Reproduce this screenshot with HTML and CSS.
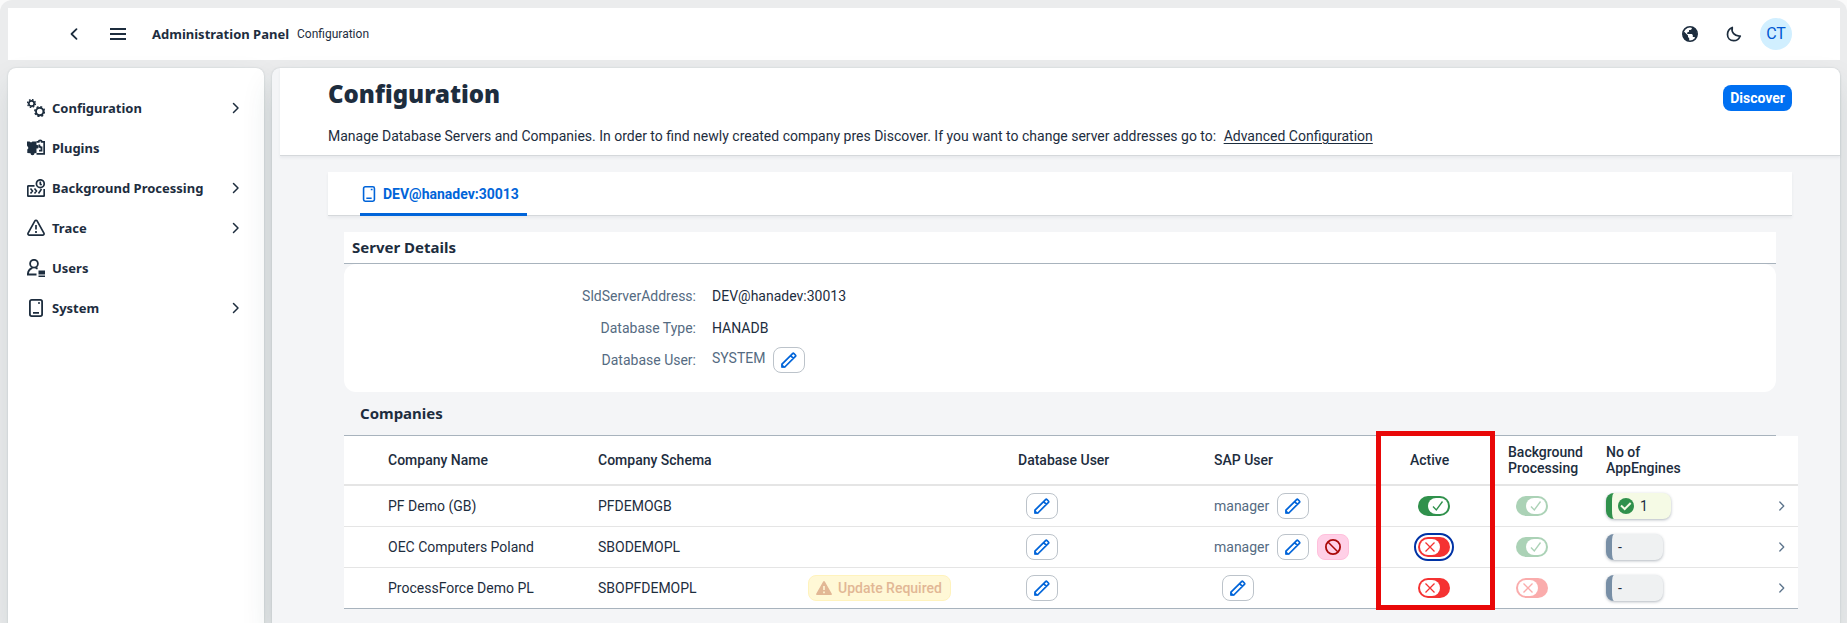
FILE: index.html
```html
<!DOCTYPE html>
<html lang="en">
<head>
<meta charset="utf-8">
<meta name="viewport" content="width=device-width, initial-scale=1">
<title>Administration Panel - Configuration</title>
<link rel="stylesheet" href="styles.css">
</head>
<body>
<svg class="sprite" aria-hidden="true">
  <symbol id="i-next" viewBox="0 0 16 16"><path d="M5.500 3.500 10 8l-4.500 4.500" fill="none" stroke="currentColor" stroke-width="1.500" stroke-linecap="round" stroke-linejoin="round"/></symbol>
  <symbol id="i-back" viewBox="0 0 16 16"><path d="M10.500 3.200 5.500 8l5 4.800" fill="none" stroke="currentColor" stroke-width="1.800" stroke-linecap="round" stroke-linejoin="round"/></symbol>
  <symbol id="i-menu" viewBox="0 0 16 16"><path d="M0 3h16M0 8h16M0 13h16" stroke="currentColor" stroke-width="2"/></symbol>
  <symbol id="i-globe" viewBox="0 0 16 16"><circle cx="8" cy="8" r="7.200" fill="none" stroke="currentColor" stroke-width="1.600"/><path d="M1.500 5 6 9.500V11l1.200 1.200V15C3.500 14.800 1 12 1 8zM9.800 1v2L8.500 4H7v1.700L5.200 6.500V8h4.600l1 1v2h1.600l1.200 1.300C14.700 11 15 9.500 15 8c0-3.300-2-6-5.200-7z" fill="currentColor"/></symbol>
  <symbol id="i-moon" viewBox="0 0 16 16"><path d="M6.300 1.500C5 6 8.500 10.500 14.300 10 13 13 10.500 14.700 7.700 14.700 4 14.700 1.500 12 1.500 8.500c0-3 1.800-5.800 4.800-7z" fill="none" stroke="currentColor" stroke-width="1.700" stroke-linejoin="round"/></symbol>
  <symbol id="i-gears" viewBox="0 0 18 18"><g fill="none" stroke="currentColor"><circle cx="4.500" cy="4.500" r="2.700" stroke-width="1.700"/><circle cx="4.500" cy="4.500" r="3.900" stroke-width="1.400" stroke-dasharray="1.600 1.463"/><circle cx="12.700" cy="12.600" r="3.700" stroke-width="1.900"/><circle cx="12.700" cy="12.600" r="4.900" stroke-width="1.500" stroke-dasharray="2 1.848"/></g></symbol>
  <symbol id="i-puzzle" viewBox="0 0 18 18"><path d="M0 2.500h2.500l1.500 1 1.500-1H9.500v3.500a1.800 1.800 0 1 1 0 3.500V14l-2 .3a2 2 0 1 1-4 0L.3 14v-3.500L1.500 9 0 6.500z" fill="currentColor"/><path d="M9.500 2.800h2.200a1.500 1.500 0 0 1 3 0h2.500v12H9.500M12.200 5.500c0 2 .8 3 2.300 3v3.200H12" fill="none" stroke="currentColor" stroke-width="1.800"/></symbol>
  <symbol id="i-process" viewBox="0 0 18 18"><g fill="none" stroke="currentColor" stroke-width="1.700"><circle cx="13.300" cy="4.700" r="3.900"/><path d="M13.300 2.500v2.500l1.300 1"/><path d="M7.500 6.800H1.600a.8.800 0 0 0-.8.800v8.800c0 .5.300.8.800.8h14.800c.5 0 .8-.3.800-.8V10"/><path d="M3.500 9.500 5.500 12l-2 2.500M7.500 9.500 9.500 12l-2 2.500M11.500 14.500l3-4.500" stroke-width="1.600"/></g></symbol>
  <symbol id="i-alert" viewBox="0 0 18 18"><path d="M7.900 1.900a1.300 1.300 0 0 1 2.200 0l6.800 12.300c.4.800 0 1.900-.9 1.900H2c-.9 0-1.300-1.100-.9-1.900z" fill="none" stroke="currentColor" stroke-width="1.700"/><path d="M9 6v4.500M9 12v2" stroke="currentColor" stroke-width="1.700"/></symbol>
  <symbol id="i-user" viewBox="0 0 18 18"><circle cx="7" cy="4.700" r="3.900" fill="none" stroke="currentColor" stroke-width="1.800"/><path d="M9.500 15.500H.9c0-3.500 2-5.700 4.500-6.700M8.600 8.800l2 .9" fill="none" stroke="currentColor" stroke-width="1.900"/><path d="M11.500 11.500H18v4h-6.500zM11.500 16.500H18V18h-6.500z" fill="currentColor"/></symbol>
  <symbol id="i-server" viewBox="0 0 18 18"><rect x="2.900" y=".9" width="12.200" height="16.200" rx="1.800" fill="none" stroke="currentColor" stroke-width="1.800"/><path d="M6 13.800h6M11 4h2" stroke="currentColor" stroke-width="1.700"/></symbol>
  <symbol id="i-edit" viewBox="0 0 16 16"><path d="M1 12.200 11.600 1.600a1 1 0 0 1 1.400 0l1.400 1.400a1 1 0 0 1 0 1.400L3.800 15H1zM9.600 3.600l2.800 2.800" fill="none" stroke="currentColor" stroke-width="1.700" stroke-linejoin="round"/><path d="M.5 11.500 4.500 15.500H.5z" fill="currentColor"/></symbol>
  <symbol id="i-block" viewBox="0 0 16 16"><circle cx="8" cy="8" r="7.100" fill="none" stroke="currentColor" stroke-width="1.800"/><path d="m3 3 10 10" stroke="currentColor" stroke-width="1.500"/></symbol>
  <symbol id="i-warn" viewBox="0 0 16 16"><path d="M7.200 1.500a1 1 0 0 1 1.600 0l7 12.200c.4.700 0 1.300-.8 1.300H1c-.8 0-1.200-.6-.8-1.300zM7.200 6v4h1.600V6zm0 5.500v1.700h1.600v-1.700z" fill="currentColor" fill-rule="evenodd"/></symbol>
  <symbol id="i-ok" viewBox="0 0 16 16"><circle cx="8" cy="8" r="8" fill="currentColor"/><path d="m3 7.500 3.700 3.500 6-6" fill="none" stroke="#f5fae5" stroke-width="2"/></symbol>
  <symbol id="i-tick" viewBox="0 0 12 12"><path d="m1 6.500 3.300 3.500L10.500 1.500" fill="none" stroke="currentColor" stroke-width="1.300"/></symbol>
  <symbol id="i-cross" viewBox="0 0 12 12"><path d="m1.500 1.500 9 9m0-9-9 9" fill="none" stroke="currentColor" stroke-width="1.300"/></symbol>
</svg>

<div class="shell">
  <header class="topbar">
    <button class="icon-btn" aria-label="Back"><svg class="ic16"><use href="#i-back"/></svg></button>
    <button class="icon-btn" aria-label="Menu"><svg class="ic16"><use href="#i-menu"/></svg></button>
    <span class="product">Administration Panel</span>
    <span class="crumb">Configuration</span>
    <div class="topbar-end">
      <button class="icon-btn" aria-label="Language"><svg class="ic16"><use href="#i-globe"/></svg></button>
      <button class="icon-btn" aria-label="Theme"><svg class="ic16"><use href="#i-moon"/></svg></button>
      <button class="avatar" aria-label="Profile">CT</button>
    </div>
  </header>

  <div class="columns">
    <nav class="sidebar">
      <a class="nav-item" href="#configuration"><svg class="ic18"><use href="#i-gears"/></svg><span>Configuration</span><svg class="ic16"><use href="#i-next"/></svg></a>
      <a class="nav-item" href="#plugins"><svg class="ic18"><use href="#i-puzzle"/></svg><span>Plugins</span></a>
      <a class="nav-item" href="#background"><svg class="ic18"><use href="#i-process"/></svg><span>Background Processing</span><svg class="ic16"><use href="#i-next"/></svg></a>
      <a class="nav-item" href="#trace"><svg class="ic18"><use href="#i-alert"/></svg><span>Trace</span><svg class="ic16"><use href="#i-next"/></svg></a>
      <a class="nav-item" href="#users"><svg class="ic18"><use href="#i-user"/></svg><span>Users</span></a>
      <a class="nav-item" href="#system"><svg class="ic18"><use href="#i-server"/></svg><span>System</span><svg class="ic16"><use href="#i-next"/></svg></a>
    </nav>

    <main class="content">
      <section class="page-head">
        <div class="head-row">
          <h1>Configuration</h1>
          <button class="primary">Discover</button>
        </div>
        <p class="intro">Manage Database Servers and Companies. In order to find newly created company pres Discover. If you want to change server addresses go to: <a href="#advanced">Advanced Configuration</a></p>
      </section>

      <div class="page-body">
        <div class="tabs" role="tablist">
          <button class="tab" role="tab" aria-selected="true"><svg class="ic16"><use href="#i-server"/></svg>DEV@hanadev:30013</button>
        </div>

        <div class="panel">
          <h2 class="section-title">Server Details</h2>
          <dl class="details">
            <dt>SldServerAddress:</dt><dd>DEV@hanadev:30013</dd>
            <dt>Database Type:</dt><dd>HANADB</dd>
            <dt>Database User:</dt><dd class="muted editable">SYSTEM <button class="edit" aria-label="Edit database user"><svg class="ic16"><use href="#i-edit"/></svg></button></dd>
          </dl>

          <h2 class="companies-title">Companies</h2>
          <table class="companies">
            <colgroup><col class="c-lead"><col class="c-wide"><col class="c-wide"><col class="c-wide"><col class="c-user"><col class="c-user"><col class="c-flag"><col class="c-flag"><col class="c-count"><col></colgroup>
            <thead>
              <tr><th></th><th>Company Name</th><th>Company Schema</th><th></th><th>Database User</th><th>SAP User</th><th class="marked">Active<span class="marker"></span></th><th>Background Processing</th><th>No of AppEngines</th><th></th></tr>
            </thead>
            <tbody>
              <tr>
                <td></td><td>PF Demo (GB)</td><td>PFDEMOGB</td><td></td>
                <td><div class="cell inset"><button class="edit" aria-label="Edit database user"><svg class="ic16"><use href="#i-edit"/></svg></button></div></td>
                <td><div class="cell"><span class="muted">manager</span><button class="edit" aria-label="Edit SAP user"><svg class="ic16"><use href="#i-edit"/></svg></button></div></td>
                <td><div class="cell inset"><label class="toggle on"><input type="checkbox" aria-label="Active" checked><svg><use href="#i-tick"/></svg></label></div></td>
                <td><div class="cell inset"><label class="toggle on faded"><input type="checkbox" aria-label="Background processing" checked disabled><svg><use href="#i-tick"/></svg></label></div></td>
                <td><div class="cell"><span class="count good"><svg class="ic16"><use href="#i-ok"/></svg>1</span></div></td>
                <td class="go"><svg class="ic14"><use href="#i-next"/></svg></td>
              </tr>
              <tr>
                <td></td><td>OEC Computers Poland</td><td>SBODEMOPL</td><td></td>
                <td><div class="cell inset"><button class="edit" aria-label="Edit database user"><svg class="ic16"><use href="#i-edit"/></svg></button></div></td>
                <td><div class="cell"><span class="muted">manager</span><button class="edit" aria-label="Edit SAP user"><svg class="ic16"><use href="#i-edit"/></svg></button><button class="edit block" aria-label="Remove SAP user"><svg class="ic16"><use href="#i-block"/></svg></button></div></td>
                <td><div class="cell inset"><label class="toggle off focused"><input type="checkbox" aria-label="Active"><svg><use href="#i-cross"/></svg></label></div></td>
                <td><div class="cell inset"><label class="toggle on faded"><input type="checkbox" aria-label="Background processing" checked disabled><svg><use href="#i-tick"/></svg></label></div></td>
                <td><div class="cell"><span class="count">-</span></div></td>
                <td class="go"><svg class="ic14"><use href="#i-next"/></svg></td>
              </tr>
              <tr>
                <td></td><td>ProcessForce Demo PL</td><td>SBOPFDEMOPL</td>
                <td><div class="cell"><button class="update" disabled><svg class="ic16"><use href="#i-warn"/></svg>Update Required</button></div></td>
                <td><div class="cell inset"><button class="edit" aria-label="Edit database user"><svg class="ic16"><use href="#i-edit"/></svg></button></div></td>
                <td><div class="cell inset"><button class="edit" aria-label="Edit SAP user"><svg class="ic16"><use href="#i-edit"/></svg></button></div></td>
                <td><div class="cell inset"><label class="toggle off"><input type="checkbox" aria-label="Active"><svg><use href="#i-cross"/></svg></label></div></td>
                <td><div class="cell inset"><label class="toggle off faded"><input type="checkbox" aria-label="Background processing" disabled><svg><use href="#i-cross"/></svg></label></div></td>
                <td><div class="cell"><span class="count">-</span></div></td>
                <td class="go"><svg class="ic14"><use href="#i-next"/></svg></td>
              </tr>
            </tbody>
          </table>
        </div>
      </div>
    </main>
  </div>
</div>
</body>
</html>
```
FILE: styles.css
```css
* { box-sizing: border-box; }

body {
  margin: 0;
  background: #fafafa;
  color: #1d2d3e;
  font: 14px/16px Roboto, "Noto Sans", sans-serif;
}

button { font: inherit; color: inherit; cursor: pointer; }
h1, h2, p, dl, dd { margin: 0; }

.sprite { position: absolute; width: 0; height: 0; }
.ic14 { width: 14px; height: 14px; flex: none; display: block; }
.ic16 { width: 16px; height: 16px; flex: none; display: block; }
.ic18 { width: 18px; height: 18px; flex: none; display: block; }

.shell {
  min-height: 100vh;
  display: flex;
  flex-direction: column;
  gap: 8px;
  padding: 8px 7px 0 8px;
  border-radius: 12px 12px 0 0;
  background: #ebeced;
}

/* Top bar */
.topbar {
  display: flex;
  align-items: center;
  height: 52px;
  padding: 0 48px;
  background: #fff;
}
.icon-btn {
  display: grid;
  place-items: center;
  width: 36px;
  height: 36px;
  padding: 0;
  border: 0;
  background: none;
}
.icon-btn + .icon-btn { margin-left: 8px; }
.product {
  margin-left: 16px;
  font-family: "Noto Sans", sans-serif;
  font-size: 13px;
  font-weight: 700;
}
.crumb { margin-left: 8px; font-size: 12px; }
.topbar-end { display: flex; align-items: center; margin-left: auto; }
.avatar {
  width: 32px;
  height: 32px;
  margin-left: 8px;
  padding: 0;
  border: 0;
  border-radius: 50%;
  background: #d1efff;
  color: #0057d2;
  font-size: 16px;
}

/* Columns */
.columns { flex: 1; display: flex; gap: 8px; }
.sidebar, .content {
  border-radius: 8px 8px 0 0;
  box-shadow: 0 0 2px rgba(34, 60, 72, .2), 0 16px 32px rgba(34, 65, 72, .12);
}
.sidebar {
  flex: none;
  width: 256px;
  padding-top: 20px;
  background: #fff;
}
.nav-item {
  display: flex;
  align-items: center;
  gap: 7px;
  height: 40px;
  padding: 0 20px 0 19px;
  color: inherit;
  font-family: "Noto Sans", sans-serif;
  font-size: 13px;
  font-weight: 700;
  text-decoration: none;
}
.nav-item span { flex: 1; }

.content {
  flex: 1;
  min-width: 0;
  padding-left: 8px;
  background: #f4f5f7;
}
.page-head {
  padding: 12px 48px 9px;
  border-bottom: 1px solid #d5d8db;
  border-top-right-radius: 8px;
  background: #fff;
  box-shadow: 0 2px 3px rgba(34, 53, 72, .06);
}
.head-row {
  display: flex;
  align-items: flex-start;
  justify-content: space-between;
  margin-bottom: 15px;
}
h1 {
  font-family: "Noto Sans", sans-serif;
  font-size: 24px;
  line-height: 28px;
  font-weight: 900;
}
.head-row .primary {
  height: 26px;
  margin-top: 5px;
  padding: 0 7px;
  border: 0;
  border-radius: 8px;
  background: #0070f2;
  color: #fff;
  font-weight: 700;
}
.intro { line-height: 20px; }
.intro a { margin-left: 4px; color: inherit; text-underline-offset: 2px; }

.page-body { padding: 16px 48px; }
.tabs {
  height: 44px;
  padding-left: 32px;
  border-bottom: 1px solid #d5d8db;
  background: #fff;
  box-shadow: 0 2px 3px rgba(34, 53, 72, .06);
}
.tab {
  display: flex;
  align-items: center;
  gap: 6px;
  height: 44px;
  padding: 3px 8px 0 1px;
  border: 0;
  border-bottom: 3px solid #0064d9;
  border-radius: 2px 2px 0 0;
  background: none;
  color: #0064d9;
  font-weight: 700;
}

.panel { padding: 16px 16px 0; }
.section-title {
  padding: 5px 8px 6px;
  border-bottom: 1px solid #a8b3bd;
  background: #fff;
  font-family: "Noto Sans", sans-serif;
  font-size: 15px;
  line-height: 20px;
}
.details {
  display: grid;
  grid-template-columns: 352px 1fr;
  grid-auto-rows: 32px;
  align-items: center;
  column-gap: 16px;
  padding: 16px 0;
  border-radius: 12px;
  background: #fff;
}
.details dt { color: #556b82; text-align: right; }
.details .editable { display: flex; align-items: flex-start; gap: 8px; line-height: 22px; }
.muted { color: #556b82; }

.edit {
  display: grid;
  place-items: center;
  width: 32px;
  height: 26px;
  padding: 0;
  border: 1px solid #bcc3ca;
  border-radius: 8px;
  background: #fff;
  color: #0064d9;
}
.block { border-color: #ffc0dc; background: #ffd0e7; color: #aa0808; }

.companies-title {
  padding: 11px 16px 12px;
  border-bottom: 1px solid #a8b3bd;
  font-family: "Noto Sans", sans-serif;
  font-size: 15px;
  line-height: 20px;
}
.companies {
  width: calc(100% + 22px);
  table-layout: fixed;
  border-spacing: 0;
  background: #fff;
}
.c-lead { width: 36px; }
.c-wide { width: 210px; }
.c-user { width: 196px; }
.c-flag { width: 98px; }
.c-count { width: 120px; }
.companies th {
  height: 50px;
  padding: 0 8px;
  border-bottom: 2px solid #e5e5e5;
  font-weight: 500;
  text-align: left;
}
.companies td {
  height: 41px;
  padding: 0 8px;
  border-bottom: 1px solid #e5e5e5;
}
.companies tr:last-child td { border-bottom-color: #a8b3bd; }
.cell { display: flex; align-items: center; gap: 8px; }
.inset { padding-left: 8px; }
.companies .go { padding-right: 9px; color: #5b738b; }
.go svg { margin-left: auto; }

.marked { position: relative; }
.marker {
  position: absolute;
  top: -5px;
  left: -26px;
  width: 119px;
  height: 179px;
  border: 5px solid #e90808;
  pointer-events: none;
}

.toggle {
  display: grid;
  width: 32px;
  height: 20px;
  padding: 2px;
  border-radius: 10px;
  align-items: center;
}
.toggle input {
  grid-area: 1 / 1;
  appearance: none;
  width: 20px;
  height: 16px;
  margin: 0;
  border-radius: 8px;
  background: #fff;
}
.toggle svg { grid-area: 1 / 1; width: 12px; height: 12px; margin: 0 4px; z-index: 1; }
.on { background: #30914c; color: #30914c; justify-items: end; }
.off { background: #f53232; color: #f53232; justify-items: start; }
.faded { opacity: .4; }
.focused { outline: 2px solid #0032a5; outline-offset: 2px; }

.count {
  display: flex;
  align-items: center;
  gap: 6px;
  width: 57px;
  height: 26px;
  padding-left: 6px;
  border-left: 6px solid #788fa6;
  border-radius: 8px;
  background: #eff1f2;
  box-shadow: 0 1px 3px rgba(34, 53, 72, .35);
}
.good { width: 65px; border-left-color: #30914c; background: #f5fae5; }
.good svg { color: #30914c; }

.update {
  display: flex;
  align-items: center;
  gap: 6px;
  height: 26px;
  padding: 0 8px 0 7px;
  border: 1px solid #fff3bd;
  border-radius: 8px;
  background: #fff8d6;
  color: #e2b795;
  font-weight: 500;
}
```
